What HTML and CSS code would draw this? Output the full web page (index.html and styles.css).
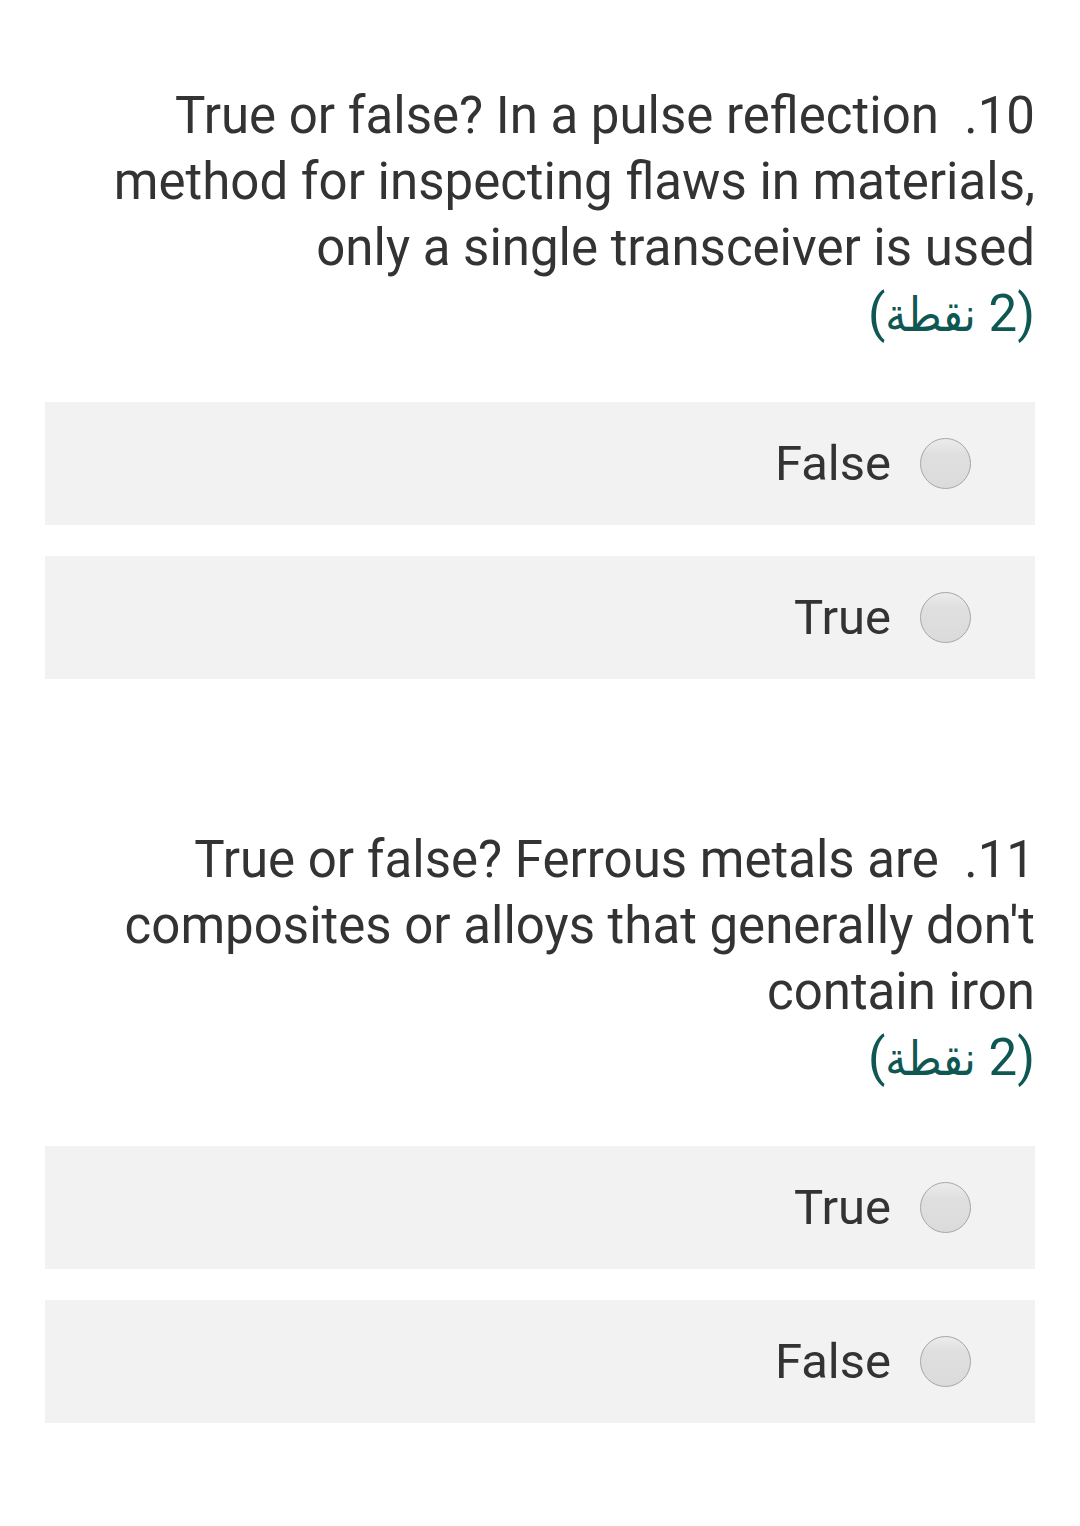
FILE: index.html
```html
<!DOCTYPE html>
<html lang="ar" dir="rtl">
<head>
<meta charset="utf-8">
<title>Quiz</title>
<link rel="stylesheet" href="styles.css">
</head>
<body>
<main class="form">
  <section class="question">
    <div class="q-title"><span class="q-num">10.</span>&nbsp; True or false? In a pulse reflection method for inspecting flaws in materials, only a single transceiver is used</div>
    <div class="q-points">(2 <span class="q-points-word">نقطة</span>)</div>
    <div class="options">
      <label class="option"><span class="radio"></span><span class="opt-label">False</span></label>
      <label class="option"><span class="radio"></span><span class="opt-label">True</span></label>
    </div>
  </section>
  <section class="question">
    <div class="q-title"><span class="q-num">11.</span>&nbsp; True or false? Ferrous metals are composites or alloys that generally don't contain iron</div>
    <div class="q-points">(2 <span class="q-points-word">نقطة</span>)</div>
    <div class="options">
      <label class="option"><span class="radio"></span><span class="opt-label">True</span></label>
      <label class="option"><span class="radio"></span><span class="opt-label">False</span></label>
    </div>
  </section>
</main>
</body>
</html>
```
FILE: styles.css
```css
html, body {
  margin: 0;
  padding: 0;
  background: #ffffff;
}
body {
  font-family: Roboto, "DejaVu Sans", sans-serif;
  color: #333333;
}
.form {
  padding: 83px 45px 0 45px;
  display: flex;
  flex-direction: column;
  gap: 148px;
}
.question {
  display: flex;
  flex-direction: column;
}
.q-title {
  font-size: 51px;
  line-height: 66px;
  text-align: right;
}
.q-points {
  font-size: 51px;
  line-height: 66px;
  color: #0e5753;
  text-align: right;
}
.q-points-word {
  font-family: "DejaVu Sans Condensed", "DejaVu Sans", sans-serif;
  font-size: 47px;
}
.options {
  margin-top: 54px;
  display: flex;
  flex-direction: column;
  gap: 31px;
}
.option {
  height: 123px;
  background: #f2f2f2;
  display: flex;
  align-items: center;
  gap: 29px;
  padding-right: 64px;
}
.radio {
  width: 49px;
  height: 49px;
  border-radius: 50%;
  border: 1.5px solid #a6a6a6;
  background: linear-gradient(to bottom, #ececec 0%, #dfdfdf 30%, #dbdbdb 100%);
  flex: none;
}
.opt-label {
  font-size: 49px;
  line-height: 60px;
  color: #333333;
}
```
